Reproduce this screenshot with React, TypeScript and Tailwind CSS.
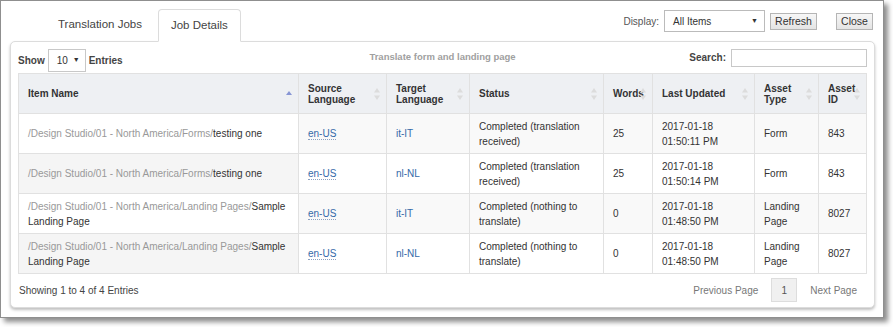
import React from "react";

const font = { fontFamily: '"Liberation Sans", Arial, sans-serif' };

type Row = {
  path: string;
  name: string;
  src: string;
  tgt: string;
  status: string;
  words: string;
  date: string;
  time: string;
  type: string;
  id: string;
};

const rows: Row[] = [
  { path: "/Design Studio/01 - North America/Forms/", name: "testing one", src: "en-US", tgt: "it-IT", status: "Completed (translation received)", words: "25", date: "2017-01-18", time: "01:50:11 PM", type: "Form", id: "843" },
  { path: "/Design Studio/01 - North America/Forms/", name: "testing one", src: "en-US", tgt: "nl-NL", status: "Completed (translation received)", words: "25", date: "2017-01-18", time: "01:50:14 PM", type: "Form", id: "843" },
  { path: "/Design Studio/01 - North America/Landing Pages/", name: "Sample Landing Page", src: "en-US", tgt: "it-IT", status: "Completed (nothing to translate)", words: "0", date: "2017-01-18", time: "01:48:50 PM", type: "Landing Page", id: "8027" },
  { path: "/Design Studio/01 - North America/Landing Pages/", name: "Sample Landing Page", src: "en-US", tgt: "nl-NL", status: "Completed (nothing to translate)", words: "0", date: "2017-01-18", time: "01:48:50 PM", type: "Landing Page", id: "8027" },
];

function SortIcon({ active }: { active?: boolean }) {
  if (active) {
    return (
      <svg width="8" height="12" viewBox="0 0 8 12" className="absolute right-[5px] top-1/2 -translate-y-1/2">
        <path d="M4 3 L7 7 L1 7 Z" fill="#8795d4" />
      </svg>
    );
  }
  return (
    <svg width="8" height="14" viewBox="0 0 8 14" className="absolute right-[5px] top-1/2 -translate-y-1/2">
      <path d="M4 1 L7 5.5 L1 5.5 Z" fill="#dcdcdc" />
      <path d="M4 13 L7 8.5 L1 8.5 Z" fill="#dcdcdc" />
    </svg>
  );
}

function Th({ children, active }: { children: React.ReactNode; active?: boolean }) {
  return (
    <th className="relative h-[40px] border border-[#e1e1e1] bg-[#eef0f3] pl-[9px] pr-[14px] text-left align-middle text-[10px] font-bold leading-[11px] text-[#333]">
      {children}
      <SortIcon active={active} />
    </th>
  );
}

function Td({ children, bg }: { children: React.ReactNode; bg: string }) {
  return (
    <td className={`h-[40px] border border-[#e1e1e1] px-[9px] align-middle text-[10px] leading-[15px] text-[#333] ${bg}`}>
      {children}
    </td>
  );
}

export default function App() {
  return (
    <div className="h-[327px] w-[893px] bg-white" style={font}>
      <div className="h-[318px] w-[884px] border border-[#8f8f8f] bg-white shadow-[4px_4px_5px_rgba(0,0,0,0.45)]">
        {/* top bar */}
        <div className="flex h-[40px] items-end justify-between">
          <div className="ml-[44px] flex items-end">
            <div className="flex h-[32px] items-center pl-[13px] pr-[16px] text-[11.5px] text-[#444]">Translation Jobs</div>
            <div className="relative z-10 -mb-px flex h-[33px] items-center rounded-t-[4px] border border-b-white border-[#dcdcdc] bg-white px-[12px] text-[11.5px] text-[#444]">
              Job Details
            </div>
          </div>
          <div className="mb-[9px] mr-[10px] flex items-center text-[10px] text-[#333]">
            <span className="mr-[5px] text-[#555]">Display:</span>
            <div className="flex h-[22px] w-[101px] items-center justify-between border border-[#bbb] bg-white pl-[8px] pr-[6px] text-[10px]">
              <span>All Items</span>
              <span className="text-[7px]">▼</span>
            </div>
            <button className="ml-[5px] h-[17px] w-[47px] border border-[#b5b5b5] bg-gradient-to-b from-[#f7f7f7] to-[#e4e4e4] text-[10.5px] leading-[15px] text-[#333]">Refresh</button>
            <button className="ml-[19px] h-[17px] w-[37px] border border-[#b5b5b5] bg-gradient-to-b from-[#f7f7f7] to-[#e4e4e4] text-[10.5px] leading-[15px] text-[#333]">Close</button>
          </div>
        </div>

        {/* panel */}
        <div className="ml-[9px] h-[267px] w-[865px] rounded-[5px] border border-[#dcdcdc] bg-white px-[7px] shadow-[0_2px_3px_rgba(0,0,0,0.25)]">
          <div className="relative flex h-[31px] items-center justify-between">
            <div className="mt-[6px] flex items-center text-[10px] font-bold text-[#444]">
              <span>Show</span>
              <div className="mx-[3px] flex h-[23px] w-[38px] items-center justify-between border border-[#c8c8c8] bg-white pl-[8px] pr-[5px] font-normal text-[#333]">
                <span>10</span>
                <span className="text-[7px]">▼</span>
              </div>
              <span>Entries</span>
            </div>
            <div className="absolute left-0 right-0 top-[8px] text-center text-[9.5px] font-bold text-[#a0a0a0]">Translate form and landing page</div>
            <div className="flex items-center text-[10px] font-bold text-[#444]">
              <span>Search:</span>
              <input className="ml-[5px] h-[18px] w-[136px] border border-[#c8c8c8] bg-white outline-none" />
            </div>
          </div>

          <table className="w-[848px] table-fixed border-collapse">
            <colgroup>
              <col className="w-[280px]" />
              <col className="w-[88px]" />
              <col className="w-[83px]" />
              <col className="w-[134px]" />
              <col className="w-[49px]" />
              <col className="w-[102px]" />
              <col className="w-[64px]" />
              <col className="w-[48px]" />
            </colgroup>
            <thead>
              <tr>
                <Th active>Item Name</Th>
                <Th>Source<br />Language</Th>
                <Th>Target<br />Language</Th>
                <Th>Status</Th>
                <Th>Words</Th>
                <Th>Last Updated</Th>
                <Th>Asset<br />Type</Th>
                <Th>Asset<br />ID</Th>
              </tr>
            </thead>
            <tbody>
              {rows.map((r, i) => {
                const odd = i % 2 === 0;
                const first = odd ? "bg-white" : "bg-[#f5f5f5]";
                const rest = odd ? "bg-[#f9f9f9]" : "bg-white";
                return (
                  <tr key={i}>
                    <Td bg={first}>
                      <span className="text-[#999]">{r.path}</span>
                      {r.name}
                    </Td>
                    <Td bg={rest}>
                      <span className="border-b border-dotted border-[#8aa0c0] text-[#3469a8]">{r.src}</span>
                    </Td>
                    <Td bg={rest}>
                      <span className="text-[#3469a8]">{r.tgt}</span>
                    </Td>
                    <Td bg={rest}>{r.status}</Td>
                    <Td bg={rest}>{r.words}</Td>
                    <Td bg={rest}>
                      {r.date}
                      <br />
                      {r.time}
                    </Td>
                    <Td bg={rest}>{r.type}</Td>
                    <Td bg={rest}>{r.id}</Td>
                  </tr>
                );
              })}
            </tbody>
          </table>

          <div className="flex h-[32px] items-center justify-between text-[10px] text-[#444]">
            <span className="ml-[1px]">Showing 1 to 4 of 4 Entries</span>
            <div className="mr-[10px] flex items-center text-[#777]">
              <span>Previous Page</span>
              <span className="ml-[13px] flex h-[24px] w-[26px] items-center justify-center border border-[#ddd] bg-[#f0f0f0] text-[#555]">1</span>
              <span className="ml-[13px]">Next Page</span>
            </div>
          </div>
        </div>
      </div>
    </div>
  );
}
